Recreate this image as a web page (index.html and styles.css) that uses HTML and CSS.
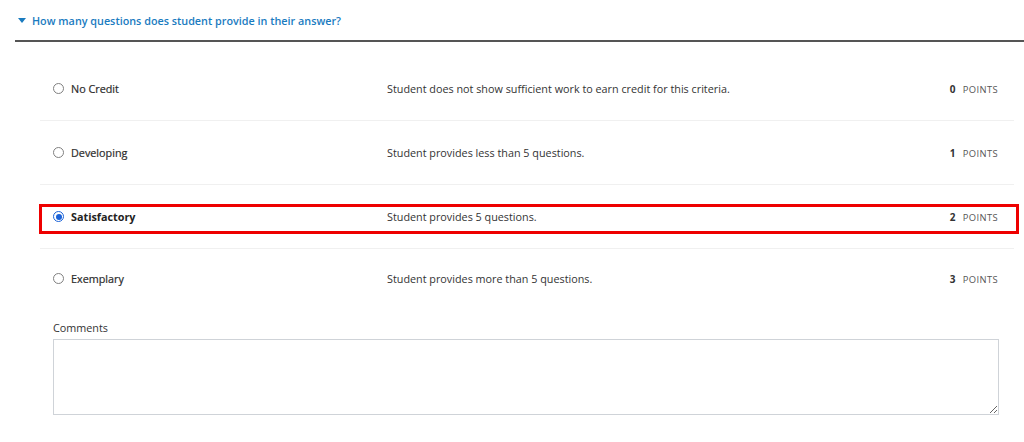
FILE: index.html
```html
<!DOCTYPE html>
<html>
<head>
<meta charset="utf-8">
<link rel="stylesheet" href="styles.css">
</head>
<body>
<div class="criterion">
  <div class="crit-header">
    <span class="caret"></span>
    <span class="crit-title">How many questions does student provide in their answer?</span>
  </div>
  <div class="levels">
    <div class="level">
      <span class="radio"></span>
      <span class="level-name">No Credit</span>
      <span class="level-desc">Student does not show sufficient work to earn credit for this criteria.</span>
      <span class="level-points"><b>0</b> POINTS</span>
    </div>
    <div class="level">
      <span class="radio"></span>
      <span class="level-name">Developing</span>
      <span class="level-desc">Student provides less than 5 questions.</span>
      <span class="level-points"><b>1</b> POINTS</span>
    </div>
    <div class="level selected">
      <span class="radio checked"></span>
      <span class="level-name">Satisfactory</span>
      <span class="level-desc">Student provides 5 questions.</span>
      <span class="level-points"><b>2</b> POINTS</span>
      <span class="highlight"></span>
    </div>
    <div class="level last">
      <span class="radio"></span>
      <span class="level-name">Exemplary</span>
      <span class="level-desc">Student provides more than 5 questions.</span>
      <span class="level-points"><b>3</b> POINTS</span>
    </div>
    <div class="comments">
      <label class="comments-label">Comments</label>
      <textarea class="comments-box"></textarea>
    </div>
  </div>
</div>
</body>
</html>
```

FILE: styles.css
```css
html, body {
  margin: 0;
  padding: 0;
  background: #fff;
  font-family: "Open Sans", "Noto Sans", sans-serif;
  color: #333;
}

.criterion {
  margin-left: 15px;
}

.crit-header {
  height: 40px;
  display: flex;
  align-items: center;
  padding-left: 3px;
  border-bottom: 2px solid #555;
}

.caret {
  width: 0;
  height: 0;
  border-left: 4px solid transparent;
  border-right: 4px solid transparent;
  border-top: 5px solid #1a7bbf;
  margin-right: 6px;
  margin-top: 1px;
}

.crit-title {
  font-size: 10.8px;
  font-weight: 600;
  color: #1a7bbf;
}

.levels {
  margin: 15px 10px 0 25px;
}

.level {
  position: relative;
  height: 63px;
  display: flex;
  align-items: center;
  padding: 0 16px 0 13px;
  border-bottom: 1px solid #f0f0f0;
  font-size: 10.8px;
}

.level.last {
  border-bottom: none;
  height: 59px;
  padding-bottom: 3px;
}

.radio {
  width: 9px;
  height: 9px;
  border: 1px solid #808080;
  border-radius: 50%;
  margin-right: 7px;
  box-sizing: content-box;
  flex: none;
  position: relative;
}

.radio.checked {
  border-color: #1a62d8;
}

.radio.checked::after {
  content: "";
  position: absolute;
  left: 1.5px;
  top: 1.5px;
  width: 6px;
  height: 6px;
  border-radius: 50%;
  background: #1a62d8;
}

.level-name {
  width: 316px;
  flex: none;
  color: #2b2b2b;
  -webkit-text-stroke: 0.2px #2b2b2b;
}

.selected .level-name {
  font-weight: 700;
  color: #222;
  -webkit-text-stroke: 0;
}

.level-desc {
  flex: 1;
  color: #333;
}

.level-points {
  font-size: 9.4px;
  color: #555;
  letter-spacing: 0.4px;
}

.level-points b {
  font-size: 10px;
  color: #333;
  margin-right: 4px;
}

.highlight {
  position: absolute;
  left: -1px;
  top: 19px;
  width: 974px;
  height: 24px;
  border: 3px solid #ee0000;
  pointer-events: none;
}

.comments {
  padding: 9px 15px 0 13px;
  display: flex;
  flex-direction: column;
}

.comments-label {
  font-size: 10.8px;
  color: #333;
  margin-bottom: 4px;
}

.comments-box {
  width: 946px;
  height: 76px;
  box-sizing: border-box;
  border: 1px solid #cfd3d8;
  margin: 0;
  padding: 4px;
  font-family: inherit;
  resize: both;
}
```
